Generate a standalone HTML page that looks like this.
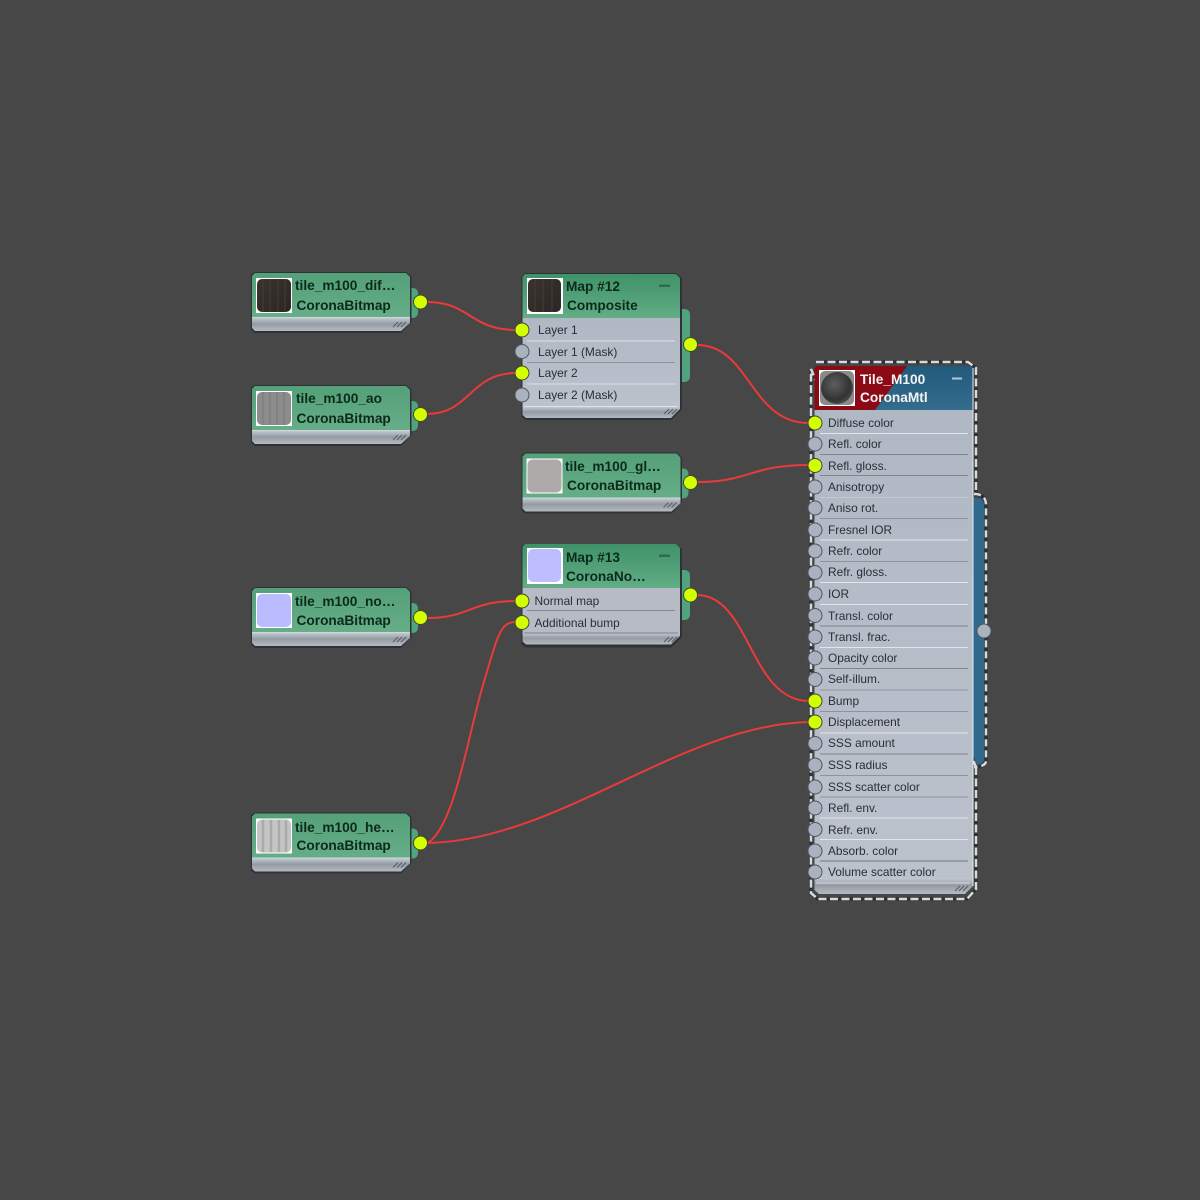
<!DOCTYPE html>
<html><head><meta charset="utf-8"><title>Slate Material Editor</title>
<style>
html,body{margin:0;padding:0;background:#474747;width:1200px;height:1200px;overflow:hidden}
svg{display:block;position:absolute;left:0;top:0;filter:blur(.35px)}
text{font-family:"Liberation Sans",sans-serif}
.t{font-weight:bold;font-size:13.7px;fill:#0c2a1c}
.w{font-weight:bold;font-size:13.7px;fill:#f4f4f4}
.r{font-size:11.9px;fill:#2a2d36}
.wire{fill:none;stroke:#ea3a3a;stroke-width:2}
</style></head><body>
<svg width="1200" height="1200" viewBox="0 0 1200 1200" xmlns="http://www.w3.org/2000/svg">
<defs>
<linearGradient id="g" x1="0" y1="0" x2="0" y2="1"><stop offset="0" stop-color="#54a078"/><stop offset="1" stop-color="#66ae88"/></linearGradient>
<linearGradient id="mg" x1="0" y1="0" x2="0" y2="1"><stop offset="0" stop-color="#3f9268"/><stop offset="1" stop-color="#62ad86"/></linearGradient>
<linearGradient id="b" x1="0" y1="0" x2="0" y2="1"><stop offset="0" stop-color="#225a7c"/><stop offset="1" stop-color="#336c8c"/></linearGradient>
<linearGradient id="f" x1="0" y1="0" x2="0" y2="1"><stop offset="0" stop-color="#c2c9d0"/><stop offset=".45" stop-color="#949ba3"/><stop offset="1" stop-color="#b4bac2"/></linearGradient>
<linearGradient id="row" x1="0" y1="0" x2="0" y2="1"><stop offset="0" stop-color="#b0b8c4"/><stop offset="1" stop-color="#bbc2cc"/></linearGradient>
<linearGradient id="th1" x1="0" y1="0" x2="1" y2="1"><stop offset="0" stop-color="#3a322d"/><stop offset="1" stop-color="#2b2724"/></linearGradient>
<radialGradient id="ball" cx=".42" cy=".38" r=".7"><stop offset="0" stop-color="#5e5e5e"/><stop offset=".7" stop-color="#333"/><stop offset="1" stop-color="#555"/></radialGradient>

<g id="bmp">
<path d="M410 288h2q6 0 6 6v18q0 6-6 6h-2z" fill="#51a37e"/>
<path d="M255 272.500h151l5 4.500V322l-10 10.500H255l-3.500-3V275z" fill="#2d3238" stroke="#2d3238" stroke-width="1"/>
<path d="M255 273h151l4 4v41H252V276z" fill="url(#g)"/>
<path d="M252 318h158v5l-9 8H255l-3-3z" fill="url(#f)"/>
<path d="M252 317.500h158" stroke="#cfd6da" stroke-width="1"/>
<path d="M397 327l5-5M401 327l5-5M393 327l5-5" stroke="#555b62" stroke-width="1"/>
<rect x="256" y="278" width="36" height="35" fill="#fff"/>
</g>
<g id="grip"><path d="M0 5l5-5M4 5l5-5M-4 5l5-5" stroke="#555b62" stroke-width="1" fill="none"/></g>
</defs>

<rect width="1200" height="1200" fill="#474747"/>

<!-- node 1 -->
<use href="#bmp"/>
<rect x="257" y="279" width="34" height="33" rx="5" fill="url(#th1)"/>
<path d="M263 279v33M270 279v33M278 279v33M285 279v33" stroke="#443c36" stroke-width="1"/>
<text class="t" x="295" y="290">tile_m100_dif…</text>
<text class="t" x="296.500" y="310">CoronaBitmap</text>

<!-- node 2 -->
<use href="#bmp" y="113"/>
<rect x="257" y="392" width="34" height="33" rx="5" fill="#8c8c8c"/>
<path d="M263 392v33M270 392v33M277 392v33M284 392v33" stroke="#7e7e7e" stroke-width="1.500"/>
<text class="t" x="296" y="403">tile_m100_ao</text>
<text class="t" x="296.500" y="423">CoronaBitmap</text>

<!-- node 3 -->
<use href="#bmp" y="315"/>
<rect x="257" y="594" width="34" height="33" rx="5" fill="#bbbbff"/>
<text class="t" x="295" y="606">tile_m100_no…</text>
<text class="t" x="296.500" y="625">CoronaBitmap</text>

<!-- node 4 -->
<use href="#bmp" y="540.500"/>
<rect x="257" y="819.500" width="34" height="33" rx="5" fill="#c4c4c4"/>
<path d="M263 820v32M271 820v32M279 820v32M286 820v32" stroke="#aaaaaa" stroke-width="2.500"/>
<text class="t" x="295" y="832">tile_m100_he…</text>
<text class="t" x="296.500" y="850">CoronaBitmap</text>

<!-- gloss node -->
<use href="#bmp" x="270.500" y="180.500"/>
<rect x="527.500" y="459.500" width="34" height="33" rx="5" fill="#aeaaaa"/>
<text class="t" x="565" y="471">tile_m100_gl…</text>
<text class="t" x="567" y="490">CoronaBitmap</text>

<!-- composite -->
<path d="M680 309h4q6 0 6 6v61q0 6-6 6h-4z" fill="#51a37e"/>
<path d="M525 273.500h151l5.500 4.500v131l-10.500 10.500H526l-4-3V277z" fill="#2d3238" stroke="#2d3238" stroke-width="1"/>
<path d="M525 274h151l4 4v40H522.500V277z" fill="url(#mg)"/>
<rect x="522.500" y="318" width="157.500" height="89" fill="url(#row)"/>
<path d="M522.500 407H680v2l-9 9H526l-3.500-3z" fill="url(#f)"/>
<g stroke-width="1" fill="none">
<path d="M527 341h148" stroke="#dfe3e8"/><path d="M527 362.500h148" stroke="#8e949d"/><path d="M527 384h148" stroke="#dde1e6"/><path d="M524 406.500h154" stroke="#dfe3e8"/>
</g>
<use href="#grip" x="668" y="409"/>
<rect x="527" y="278" width="36" height="36" fill="#fff"/>
<rect x="528" y="279" width="33" height="33" rx="5" fill="url(#th1)"/>
<path d="M535 279v33M543 279v33M552 279v33" stroke="#443c36" stroke-width="1"/>
<text class="t" x="566" y="291">Map #12</text>
<text class="t" x="567" y="310">Composite</text>
<rect x="659" y="284.500" width="11" height="2.500" fill="#2f6b50"/>
<text class="r" x="538" y="334">Layer 1</text>
<text class="r" x="538" y="356">Layer 1 (Mask)</text>
<text class="r" x="538" y="377">Layer 2</text>
<text class="r" x="538" y="399">Layer 2 (Mask)</text>

<!-- map 13 -->
<path d="M680 570h4q6 0 6 6v38q0 6-6 6h-4z" fill="#51a37e"/>
<path d="M525 544.500h151l5.500 4.500v88l-10.500 10H526l-4-3V547z" fill="#2d3238" stroke="#2d3238" stroke-width="1"/>
<path d="M525 544h151l4 4v40H522.500V547z" fill="url(#mg)"/>
<rect x="522.500" y="588" width="157.500" height="46" fill="#b6bbc6"/>
<path d="M522.500 633H680v3l-9 8.500H526l-3.500-3z" fill="url(#f)"/>
<path d="M527 610.500h148" stroke="#858b95" stroke-width="1"/>
<path d="M524 633h154" stroke="#7d838c" stroke-width="1"/>
<use href="#grip" x="668" y="637"/>
<rect x="527" y="548" width="36" height="36" fill="#fff"/>
<rect x="528" y="549" width="33" height="33" rx="5" fill="#bdbdff"/>
<text class="t" x="566" y="562">Map #13</text>
<text class="t" x="566" y="581">CoronaNo…</text>
<rect x="659" y="554.500" width="11" height="2.500" fill="#2f6b50"/>
<text class="r" x="534.500" y="605">Normal map</text>
<text class="r" x="534.500" y="627">Additional bump</text>

<!-- material -->
<path d="M973 498h3q8 0 8 8v252q0 6-8 7h-3z" fill="#2f6a8c"/>
<path d="M974 494h2q10 1 10 11v256q0 5-10 6h-2" fill="none" stroke="#2d3238" stroke-width="3.500"/>
<path d="M816 362h152l8 6v126M976 767v122l-9 10H818l-7-6V369z" fill="none" stroke="#2d3238" stroke-width="3.500"/>
<path d="M974 494h2q10 1 10 11v256q0 5-10 6h-2" fill="none" stroke="#d8dbdc" stroke-width="2.500" stroke-dasharray="7 4"/>
<path d="M816 362h152l8 6v126M976 767v122l-9 10H818l-7-6V369z" fill="none" stroke="#d8dbdc" stroke-width="2.500" stroke-dasharray="8 3.500"/>
<rect x="814.500" y="366" width="158.500" height="44" rx="2" fill="url(#b)"/>
<path d="M816 366h91l-32 44h-60.500V368z" fill="#8c0a16"/>
<rect x="814.500" y="410" width="158.500" height="468" fill="url(#row)"/>
<path d="M814.500 878H973v8l-8 8H819l-4.500-4z" fill="url(#f)"/>
<path d="M973 368v518" stroke="#e6eaee" stroke-width="1"/>
<use href="#grip" x="959" y="886"/>
<g stroke-width="1" fill="none">
<path d="M820 433.500h148" stroke="#e2e6ea"/><path d="M820 454.500h148" stroke="#7e858f"/><path d="M820 475.500h148" stroke="#7e858f"/><path d="M820 497.500h148" stroke="#c4cad2"/><path d="M820 518.500h148" stroke="#8d949e"/><path d="M820 540h148" stroke="#e2e6ea"/><path d="M820 561.500h148" stroke="#8d949e"/><path d="M820 582.500h148" stroke="#e2e6ea"/><path d="M820 604.500h148" stroke="#e2e6ea"/><path d="M820 626h148" stroke="#7e858f"/><path d="M820 647.500h148" stroke="#e2e6ea"/><path d="M820 668.500h148" stroke="#7e858f"/><path d="M820 690h148" stroke="#8d949e"/><path d="M820 711.500h148" stroke="#8d949e"/><path d="M820 733h148" stroke="#e2e6ea"/><path d="M820 754h148" stroke="#7e858f"/><path d="M820 775.500h148" stroke="#8d949e"/><path d="M820 797h148" stroke="#8d949e"/><path d="M820 818h148" stroke="#e2e6ea"/><path d="M820 839.500h148" stroke="#e2e6ea"/><path d="M820 861h148" stroke="#6f7681"/><path d="M816 883h154" stroke="#d5dade"/>
</g>
<rect x="819" y="370" width="36" height="36" fill="#fff"/>
<rect x="820" y="371" width="34" height="34" rx="5" fill="#8a8a8a"/>
<circle cx="837" cy="388" r="16" fill="url(#ball)"/>
<text class="w" x="860" y="384">Tile_M100</text>
<text class="w" x="860" y="402">CoronaMtl</text>
<rect x="952" y="377.500" width="10" height="2" fill="#b6c6d2"/>
<g class="rows">
<text class="r" x="828" y="427">Diffuse color</text>
<text class="r" x="828" y="448">Refl. color</text>
<text class="r" x="828" y="470">Refl. gloss.</text>
<text class="r" x="828" y="491">Anisotropy</text>
<text class="r" x="828" y="512">Aniso rot.</text>
<text class="r" x="828" y="534">Fresnel IOR</text>
<text class="r" x="828" y="555">Refr. color</text>
<text class="r" x="828" y="576">Refr. gloss.</text>
<text class="r" x="828" y="598">IOR</text>
<text class="r" x="828" y="620">Transl. color</text>
<text class="r" x="828" y="641">Transl. frac.</text>
<text class="r" x="828" y="662">Opacity color</text>
<text class="r" x="828" y="683">Self-illum.</text>
<text class="r" x="828" y="705">Bump</text>
<text class="r" x="828" y="726">Displacement</text>
<text class="r" x="828" y="747">SSS amount</text>
<text class="r" x="828" y="769">SSS radius</text>
<text class="r" x="828" y="791">SSS scatter color</text>
<text class="r" x="828" y="812">Refl. env.</text>
<text class="r" x="828" y="834">Refr. env.</text>
<text class="r" x="828" y="855">Absorb. color</text>
<text class="r" x="828" y="876">Volume scatter color</text>
</g>

<!-- wires -->
<path class="wire" d="M427 302C470 302 470 330 516 330"/>
<path class="wire" d="M427 414C470 414 470 373 516 373"/>
<path class="wire" d="M697 345C750 345 750 423 809 423"/>
<path class="wire" d="M697 482C750 482 750 465 809 465"/>
<path class="wire" d="M427 618C470 618 470 601 516 601"/>
<path class="wire" d="M428 843C455 825 468 735 483 685S500 622 516 622"/>
<path class="wire" d="M428 843C560 840 680 725 809 722"/>
<path class="wire" d="M697 595C750 595 750 701 809 701"/>

<!-- sockets -->
<g fill="#d4ff00" stroke="#3e4a2e" stroke-width="1">
<circle cx="420.500" cy="302" r="7"/><circle cx="420.500" cy="414.500" r="7"/><circle cx="420.500" cy="617.500" r="7"/><circle cx="420.500" cy="843" r="7"/>
<circle cx="690.500" cy="482.500" r="7"/><circle cx="690.500" cy="344.500" r="7"/><circle cx="690.500" cy="595" r="7"/>
<circle cx="522" cy="330" r="7"/><circle cx="522" cy="373" r="7"/><circle cx="522" cy="601" r="7"/><circle cx="522" cy="622.500" r="7"/>
<circle cx="815" cy="423" r="7"/><circle cx="815" cy="465.500" r="7"/><circle cx="815" cy="701" r="7"/><circle cx="815" cy="722" r="7"/>
</g>
<g fill="#a9b2be" stroke="#4f5661" stroke-width="1">
<circle cx="522" cy="351.500" r="7"/><circle cx="522" cy="395" r="7"/>
<circle cx="815" cy="444" r="7"/><circle cx="815" cy="487" r="7"/><circle cx="815" cy="508" r="7"/><circle cx="815" cy="530" r="7"/><circle cx="815" cy="551" r="7"/><circle cx="815" cy="572.500" r="7"/><circle cx="815" cy="594" r="7"/><circle cx="815" cy="615.500" r="7"/><circle cx="815" cy="637" r="7"/><circle cx="815" cy="658" r="7"/><circle cx="815" cy="679.500" r="7"/><circle cx="815" cy="743.500" r="7"/><circle cx="815" cy="765" r="7"/><circle cx="815" cy="787" r="7"/><circle cx="815" cy="808" r="7"/><circle cx="815" cy="829.500" r="7"/><circle cx="815" cy="851" r="7"/><circle cx="815" cy="872" r="7"/>
<circle cx="984" cy="631" r="7"/>
</g>
</svg>
</body></html>
